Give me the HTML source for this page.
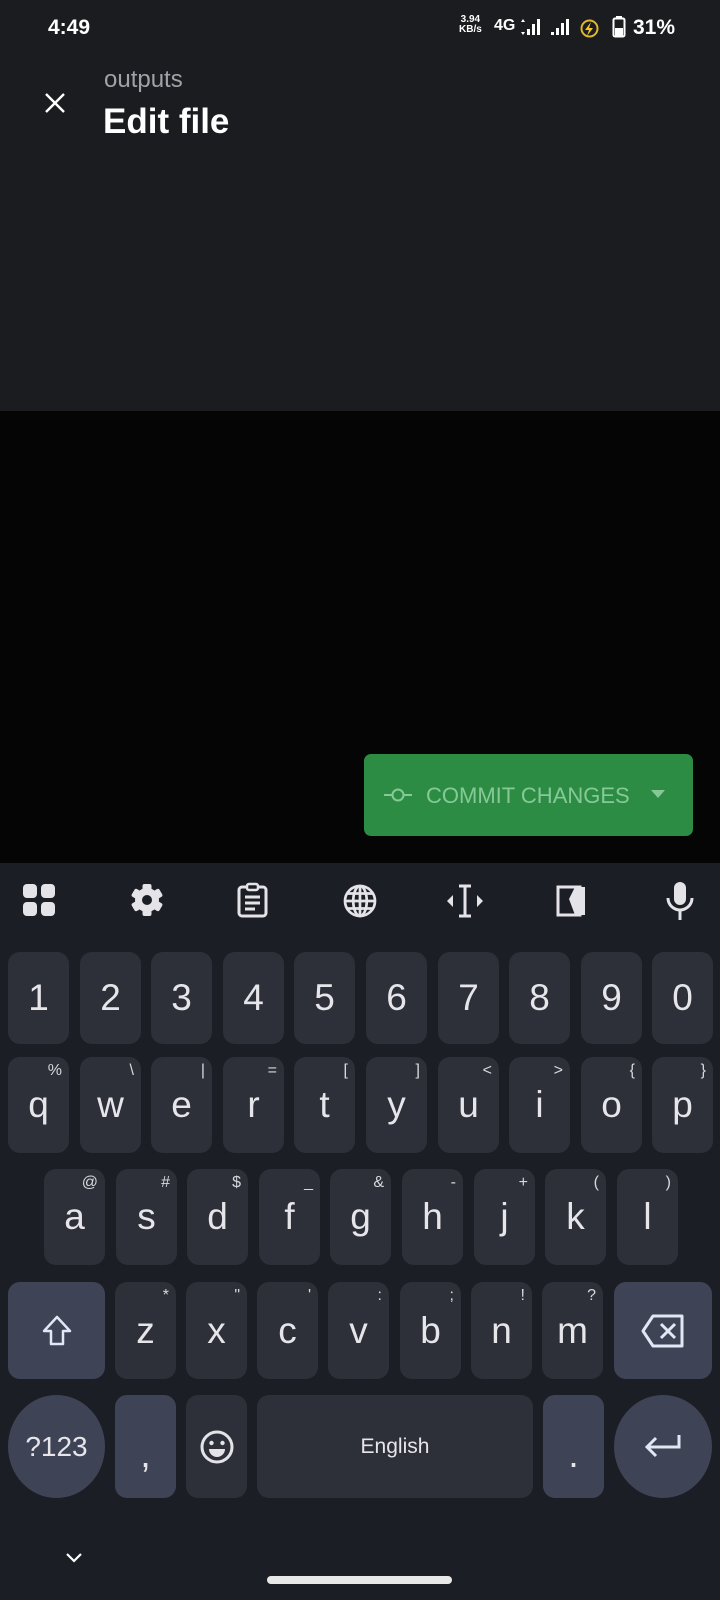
<!DOCTYPE html>
<html><head><meta charset="utf-8"><style>
*{margin:0;padding:0;box-sizing:border-box}
body{width:720px;height:1600px;background:#1b1c20;position:relative;overflow:hidden;font-family:"Liberation Sans",Roboto,sans-serif;color:#fff}
.a{position:absolute}
.k{position:absolute;background:#2e3039;border-radius:12px;color:#e6e6ea;font-size:37px;display:flex;align-items:center;justify-content:center}
.s{background:#3e4456}
.h{position:absolute;top:6px;right:7px;font-size:16px;color:#d8d8dc;line-height:1}
.ic{stroke:#e3e3e8;fill:none;stroke-width:3}
</style></head><body>
<div class="a" style="left:48px;top:16px;font-size:21px;font-weight:bold">4:49</div>
<div class="a" style="left:459px;top:15px;font-size:10px;font-weight:bold;line-height:10px;text-align:center">3.94<br>KB/s</div>
<div class="a" style="left:494px;top:17px;font-size:16px;font-weight:bold">4G</div>
<svg class="a" style="left:519px;top:17px" width="22" height="20"><path d="M2 5l2-3 2 3M2 15l2 3 2-3" fill="#fff"/><rect x="8" y="12" width="3" height="6" fill="#fff"/><rect x="13" y="7" width="3" height="11" fill="#fff"/><rect x="18" y="2" width="3" height="16" fill="#fff"/></svg>
<svg class="a" style="left:550px;top:17px" width="22" height="20"><rect x="1" y="15" width="3" height="3" fill="#fff"/><rect x="6" y="11" width="3" height="7" fill="#fff"/><rect x="11" y="6" width="3" height="12" fill="#fff"/><rect x="16" y="2" width="3" height="16" fill="#fff"/></svg>
<svg class="a" style="left:580px;top:19px" width="19" height="19"><circle cx="9.5" cy="9.5" r="8" fill="none" stroke="#e0b62a" stroke-width="2"/><path d="M11 3L5 11h4l-2 6 6-8H9z" fill="#f3c623"/></svg>
<svg class="a" style="left:612px;top:15px" width="14" height="24"><rect x="4" y="1" width="6" height="3" fill="#fff"/><rect x="1.5" y="3.5" width="11" height="18" rx="1.5" fill="none" stroke="#fff" stroke-width="2"/><rect x="3" y="13" width="8" height="8" fill="#fff"/></svg>
<div class="a" style="left:633px;top:16px;font-size:21px;font-weight:bold">31%</div>
<svg class="a" style="left:44px;top:92px" width="22" height="22"><path d="M2 2L20 20M20 2L2 20" stroke="#fff" stroke-width="2.4"/></svg>
<div class="a" style="left:104px;top:66px;font-size:24px;color:#a0a2a8">outputs</div>
<div class="a" style="left:103px;top:102px;font-size:35px;font-weight:bold">Edit file</div>
<div class="a" style="left:0;top:411px;width:720px;height:452px;background:#050505"></div>
<div class="a" style="left:364px;top:754px;width:329px;height:82px;background:#2c8c44;border-radius:7px"></div>
<svg class="a" style="left:384px;top:785px" width="28" height="20"><path d="M0 10h8M20 10h8" stroke="#86c997" stroke-width="2"/><circle cx="14" cy="10" r="5.5" fill="none" stroke="#86c997" stroke-width="2"/></svg>
<div class="a" style="left:426px;top:783px;font-size:22px;color:#86c997">COMMIT CHANGES</div>
<svg class="a" style="left:651px;top:790px" width="14" height="9"><path d="M0 0h14L7 8z" fill="#86c997"/></svg>
<div class="a" style="left:0;top:863px;width:720px;height:737px;background:#1c1e25"></div>
<svg class="a" style="left:22px;top:883px" width="34" height="34"><rect x="1" y="1" width="14" height="14" rx="4" fill="#e3e3e8"/><rect x="19" y="1" width="14" height="14" rx="4" fill="#e3e3e8"/><rect x="1" y="19" width="14" height="14" rx="4" fill="#e3e3e8"/><rect x="19" y="19" width="14" height="14" rx="4" fill="#e3e3e8"/></svg>
<svg class="a" style="left:130px;top:883px" width="34" height="34" viewBox="0 0 34 34"><g fill="#e3e3e8" transform="translate(17 17)"><rect x="-4.5" y="-16" width="9" height="32" rx="2"/><rect x="-4.5" y="-16" width="9" height="32" rx="2" transform="rotate(60)"/><rect x="-4.5" y="-16" width="9" height="32" rx="2" transform="rotate(120)"/><circle r="12"/></g><circle cx="17" cy="17" r="5" fill="#1c1e25"/></svg>
<svg class="a" style="left:236px;top:882px" width="34" height="36"><rect x="3" y="5" width="27" height="29" rx="3" class="ic"/><rect x="11" y="2" width="11" height="6" rx="2" fill="#1c1e25" stroke="#e3e3e8" stroke-width="2.5"/><path d="M9 15h15M9 21h15M9 27h10" class="ic"/></svg>
<svg class="a" style="left:342px;top:883px" width="36" height="36" viewBox="0 0 24 24"><g fill="none" stroke="#e3e3e8" stroke-width="1.8"><circle cx="12" cy="12" r="10"/><ellipse cx="12" cy="12" rx="4.5" ry="10"/><path d="M2 12h20M3.5 7h17M3.5 17h17M12 2v20"/></g></svg>
<svg class="a" style="left:445px;top:883px" width="40" height="36"><path d="M2 18l6-6v12z M38 18l-6-6v12z" fill="#e3e3e8"/><path d="M14 3h12M14 33h12M20 3v30" stroke="#e3e3e8" stroke-width="3"/></svg>
<svg class="a" style="left:555px;top:883px" width="34" height="36"><path d="M3 4h22v28H3z" class="ic"/><path d="M14 16l6-12h10v28H20z" fill="#e3e3e8"/></svg>
<svg class="a" style="left:664px;top:881px" width="32" height="40"><rect x="10" y="1" width="12" height="23" rx="6" fill="#e3e3e8"/><path d="M4 17a12 12 0 0024 0M16 29v10" class="ic"/></svg>
<div class="k" style="left:8px;top:952px;width:61px;height:92px">1</div>
<div class="k" style="left:80px;top:952px;width:61px;height:92px">2</div>
<div class="k" style="left:151px;top:952px;width:61px;height:92px">3</div>
<div class="k" style="left:223px;top:952px;width:61px;height:92px">4</div>
<div class="k" style="left:294px;top:952px;width:61px;height:92px">5</div>
<div class="k" style="left:366px;top:952px;width:61px;height:92px">6</div>
<div class="k" style="left:438px;top:952px;width:61px;height:92px">7</div>
<div class="k" style="left:509px;top:952px;width:61px;height:92px">8</div>
<div class="k" style="left:581px;top:952px;width:61px;height:92px">9</div>
<div class="k" style="left:652px;top:952px;width:61px;height:92px">0</div>
<div class="k" style="left:8px;top:1057px;width:61px;height:96px">q<span class="h">%</span></div>
<div class="k" style="left:80px;top:1057px;width:61px;height:96px">w<span class="h">\</span></div>
<div class="k" style="left:151px;top:1057px;width:61px;height:96px">e<span class="h">|</span></div>
<div class="k" style="left:223px;top:1057px;width:61px;height:96px">r<span class="h">=</span></div>
<div class="k" style="left:294px;top:1057px;width:61px;height:96px">t<span class="h">[</span></div>
<div class="k" style="left:366px;top:1057px;width:61px;height:96px">y<span class="h">]</span></div>
<div class="k" style="left:438px;top:1057px;width:61px;height:96px">u<span class="h">&lt;</span></div>
<div class="k" style="left:509px;top:1057px;width:61px;height:96px">i<span class="h">&gt;</span></div>
<div class="k" style="left:581px;top:1057px;width:61px;height:96px">o<span class="h">{</span></div>
<div class="k" style="left:652px;top:1057px;width:61px;height:96px">p<span class="h">}</span></div>
<div class="k" style="left:44px;top:1169px;width:61px;height:96px">a<span class="h">@</span></div>
<div class="k" style="left:116px;top:1169px;width:61px;height:96px">s<span class="h">#</span></div>
<div class="k" style="left:187px;top:1169px;width:61px;height:96px">d<span class="h">$</span></div>
<div class="k" style="left:259px;top:1169px;width:61px;height:96px">f<span class="h">_</span></div>
<div class="k" style="left:330px;top:1169px;width:61px;height:96px">g<span class="h">&amp;</span></div>
<div class="k" style="left:402px;top:1169px;width:61px;height:96px">h<span class="h">-</span></div>
<div class="k" style="left:474px;top:1169px;width:61px;height:96px">j<span class="h">+</span></div>
<div class="k" style="left:545px;top:1169px;width:61px;height:96px">k<span class="h">(</span></div>
<div class="k" style="left:617px;top:1169px;width:61px;height:96px">l<span class="h">)</span></div>
<div class="k s" style="left:8px;top:1282px;width:97px;height:97px"><svg width="32" height="34"><path d="M16 3L3 17h7v13h12V17h7z" fill="none" stroke="#e3e6f5" stroke-width="2.5" stroke-linejoin="round"/></svg></div>
<div class="k" style="left:115px;top:1282px;width:61px;height:97px">z<span class="h">*</span></div>
<div class="k" style="left:186px;top:1282px;width:61px;height:97px">x<span class="h">"</span></div>
<div class="k" style="left:257px;top:1282px;width:61px;height:97px">c<span class="h">'</span></div>
<div class="k" style="left:328px;top:1282px;width:61px;height:97px">v<span class="h">:</span></div>
<div class="k" style="left:400px;top:1282px;width:61px;height:97px">b<span class="h">;</span></div>
<div class="k" style="left:471px;top:1282px;width:61px;height:97px">n<span class="h">!</span></div>
<div class="k" style="left:542px;top:1282px;width:61px;height:97px">m<span class="h">?</span></div>
<div class="k s" style="left:614px;top:1282px;width:98px;height:97px"><svg width="46" height="36"><path d="M13 3h29v30H13L3 18z" fill="none" stroke="#e3e6f5" stroke-width="3" stroke-linejoin="round"/><path d="M21 11l14 14M35 11L21 25" stroke="#e3e6f5" stroke-width="3"/></svg></div>
<div class="k s" style="left:8px;top:1395px;width:97px;height:103px;border-radius:50%;font-size:28px">?123</div>
<div class="k s" style="left:115px;top:1395px;width:61px;height:103px;align-items:flex-end;padding-bottom:22px">,</div>
<div class="k" style="left:186px;top:1395px;width:61px;height:103px"><svg width="36" height="36"><circle cx="18" cy="18" r="15" fill="none" stroke="#e3e3e8" stroke-width="3"/><circle cx="12.5" cy="14" r="2.2" fill="#e3e3e8"/><circle cx="23.5" cy="14" r="2.2" fill="#e3e3e8"/><path d="M10 20h16a8 8 0 01-16 0z" fill="#e3e3e8"/></svg></div>
<div class="k" style="left:257px;top:1395px;width:276px;height:103px;font-size:21px">English</div>
<div class="k s" style="left:543px;top:1395px;width:61px;height:103px;align-items:flex-end;padding-bottom:22px">.</div>
<div class="k s" style="left:614px;top:1395px;width:98px;height:103px;border-radius:50%"><svg width="40" height="30"><path d="M36 3v12H5M13 6L4 15l9 9" fill="none" stroke="#e3e6f5" stroke-width="3"/></svg></div>
<svg class="a" style="left:65px;top:1552px" width="18" height="12"><path d="M2 2l7 7 7-7" fill="none" stroke="#fff" stroke-width="2.2"/></svg>
<div class="a" style="left:267px;top:1576px;width:185px;height:8px;border-radius:4px;background:#e8e8e8"></div>
</body></html>
